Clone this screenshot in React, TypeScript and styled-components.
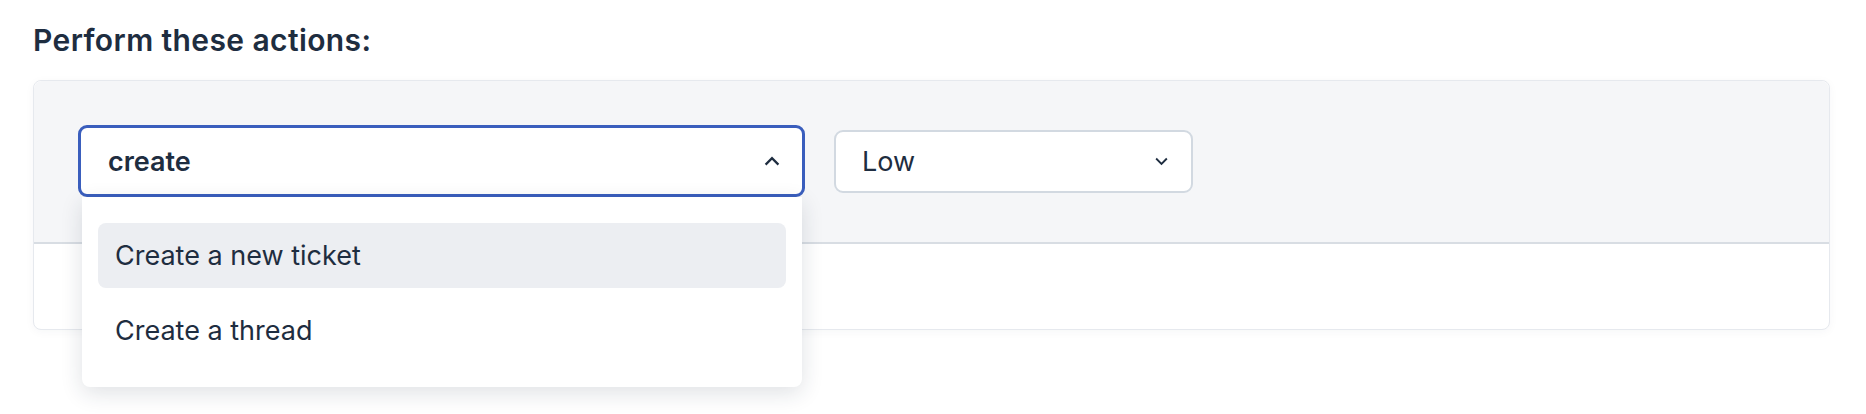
import React, { useState } from "react";
import styled, { createGlobalStyle } from "styled-components";

const GlobalStyle = createGlobalStyle`
  body {
    margin: 0;
    background: #ffffff;
    font-family: Inter, "Noto Sans", sans-serif;
    color: #1e2d40;
  }
`;

const Page = styled.div`
  box-sizing: border-box;
  min-height: 414px;
  padding: 22px 36px 0 33px;
`;

const Title = styled.h2`
  margin: 0 0 22px;
  font-size: 30px;
  font-weight: 600;
  line-height: 36px;
  letter-spacing: 0.4px;
  color: #1e2d40;
`;

const Card = styled.div`
  border: 1px solid #e6e9ee;
  border-radius: 8px;
  background: #fff;
  box-shadow: 0 2px 10px rgba(30, 45, 64, 0.04);
`;

const ActionRow = styled.div`
  display: flex;
  align-items: center;
  gap: 29px;
  padding: 44px 44px 45px;
  background: #f5f6f8;
  border-bottom: 2px solid #d8dde3;
  border-radius: 8px 8px 0 0;
`;

const Footer = styled.div`
  height: 85px;
`;

const SelectWrap = styled.div<{ $width: number }>`
  position: relative;
  width: ${(p) => p.$width}px;
`;

const SelectBox = styled.div<{ $open?: boolean }>`
  display: flex;
  align-items: center;
  justify-content: space-between;
  box-sizing: border-box;
  height: ${(p) => (p.$open ? 72 : 63)}px;
  padding: ${(p) => (p.$open ? "0 21px 0 27px" : "0 22px 0 26px")};
  background: #fff;
  border: ${(p) => (p.$open ? "3px solid #3a5ebd" : "2px solid #d2d9e1")};
  border-radius: 9px;
  font-size: 27px;
  font-weight: ${(p) => (p.$open ? 600 : 400)};
  color: #1e2d40;
  cursor: pointer;
`;

const Menu = styled.div`
  position: absolute;
  top: 72px;
  left: 4px;
  right: 3px;
  z-index: 2;
  box-sizing: border-box;
  padding: 26px 16px 24px;
  background: #fff;
  border-radius: 0 0 8px 8px;
  box-shadow: 0 6px 22px rgba(30, 45, 64, 0.14);
`;

const MenuItem = styled.div<{ $active?: boolean }>`
  display: flex;
  align-items: center;
  height: 65px;
  padding: 0 17px;
  margin-bottom: 10px;
  border-radius: 8px;
  background: ${(p) => (p.$active ? "#eceef2" : "transparent")};
  font-size: 27px;
  color: #1e2d40;
  &:last-child {
    margin-bottom: 0;
  }
`;

const Chevron = ({ up, size }: { up?: boolean; size: number }) => (
  <svg width={size} height={size} viewBox="0 0 16 16" fill="none">
    <path
      d={up ? "M3 10.5 8 5.5l5 5" : "M3 5.5l5 5 5-5"}
      stroke="#1e2d40"
      strokeWidth="2"
      strokeLinecap="square"
    />
  </svg>
);

export default function App() {
  const [active] = useState(0);
  const options = ["Create a new ticket", "Create a thread"];

  return (
    <Page>
      <GlobalStyle />
      <Title>Perform these actions:</Title>
      <Card>
        <ActionRow>
          <SelectWrap $width={727}>
            <SelectBox $open>
              create
              <Chevron up size={18} />
            </SelectBox>
            <Menu>
              {options.map((o, i) => (
                <MenuItem key={o} $active={i === active}>
                  {o}
                </MenuItem>
              ))}
            </Menu>
          </SelectWrap>
          <SelectWrap $width={359}>
            <SelectBox>
              Low
              <Chevron size={15} />
            </SelectBox>
          </SelectWrap>
        </ActionRow>
        <Footer />
      </Card>
    </Page>
  );
}
